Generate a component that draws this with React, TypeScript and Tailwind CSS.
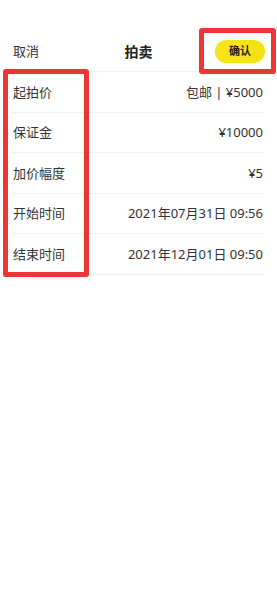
import React from 'react'

const ROWS: { label: string; value: string }[] = [
  { label: '起拍价', value: '包邮 | ¥5000' },
  { label: '保证金', value: '¥10000' },
  { label: '加价幅度', value: '¥5' },
  { label: '开始时间', value: '2021年07月31日 09:56' },
  { label: '结束时间', value: '2021年12月01日 09:50' },
]

export default function App() {
  return (
    <div
      className="relative h-[600px] w-[277px] overflow-hidden bg-white text-[#333]"
      style={{ fontFamily: '"Noto Sans", "Noto Sans CJK SC", sans-serif' }}
    >
      {/* header */}
      <div className="pt-[32px]">
        <div className="mx-3 flex h-[40px] items-center justify-between border-b border-[#f2f2f2]">
          <span className="w-[60px] pl-px text-[13px] text-[#333]">取消</span>
          <span className="text-[14px] font-bold text-[#222]">拍卖</span>
          <div className="flex w-[60px] justify-end">
            <button className="-mt-px flex h-[23px] w-[50px] items-center justify-center rounded-full bg-gradient-to-r from-[#f8e51a] to-[#f3e20c] text-[11px] font-bold text-[#222]">
              确认
            </button>
          </div>
        </div>
      </div>

      {/* rows */}
      <div className="px-3">
        {ROWS.map((row) => (
          <div
            key={row.label}
            className="flex h-[40.5px] items-center justify-between border-b border-[#f2f2f2] pl-px pr-[2px] pt-px text-[13px] text-[#333]"
          >
            <span>{row.label}</span>
            <span>{row.value}</span>
          </div>
        ))}
      </div>

      {/* annotation boxes */}
      <div className="absolute left-[199px] top-[28px] h-[46px] w-[77px] rounded-[3px] border-[5px] border-[#ee3535]" />
      <div className="absolute left-[3px] top-[69px] h-[208px] w-[86px] rounded-[3px] border-[5px] border-[#ee3535]" />
    </div>
  )
}
